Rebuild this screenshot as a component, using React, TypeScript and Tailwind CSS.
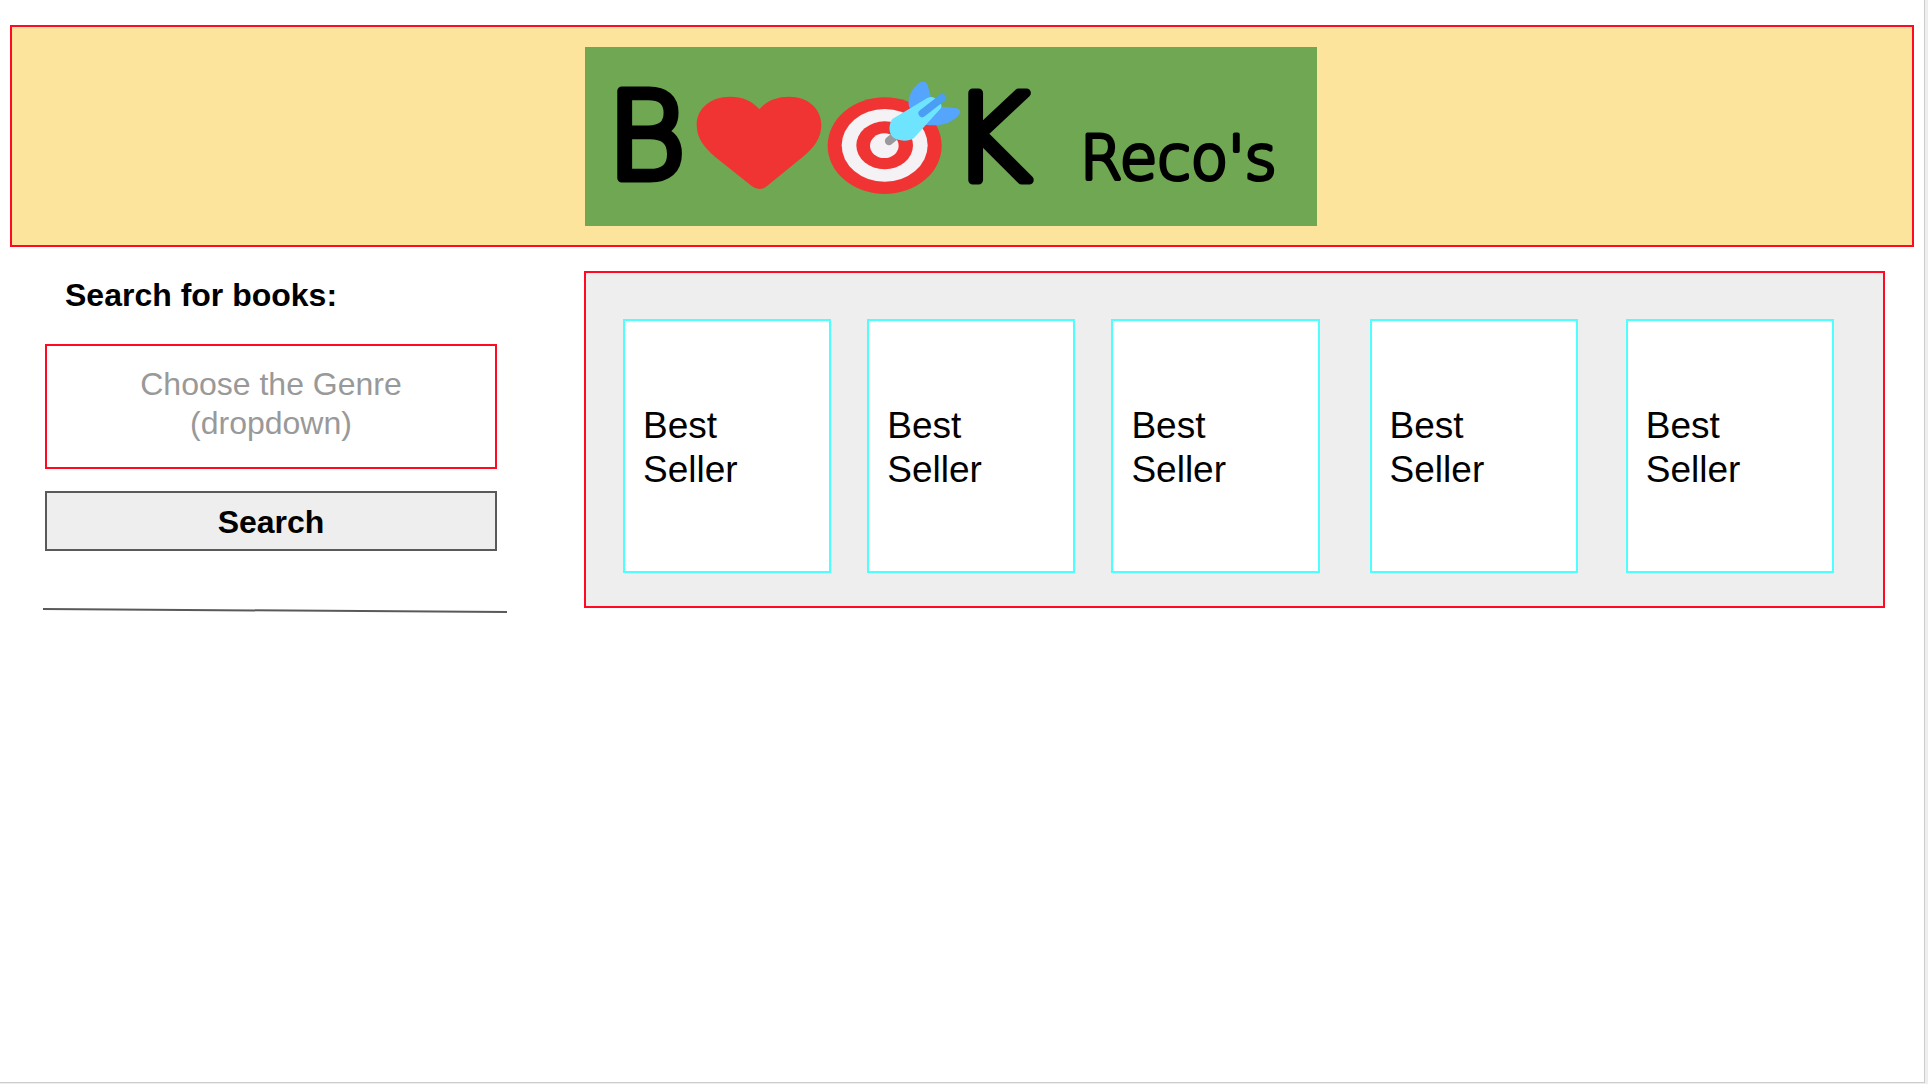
import { useState } from "react";

const genres = ["Fiction", "Mystery", "Romance", "Science Fiction", "Biography"];

const bestSellers = [
  { id: 1, gap: "" },
  { id: 2, gap: "ml-9" },
  { id: 3, gap: "ml-9" },
  { id: 4, gap: "ml-[50px]" },
  { id: 5, gap: "ml-12" },
];

function Logo() {
  return (
    <svg
      viewBox="0 0 732 179"
      role="img"
      aria-label="Book Reco's"
      className="block w-[732px] max-w-full bg-[#6fa753]"
    >
      <g
        fontFamily='"DejaVu Sans", sans-serif'
        fontWeight={200}
        fill="#000"
        stroke="#000"
        strokeLinejoin="round"
      >
        <text x="22" y="131" fontSize="120" strokeWidth="9">B</text>
        <text x="367" y="133" fontSize="120" strokeWidth="9">K</text>
        <text x="495" y="132" fontSize="61" strokeWidth="4">Reco's</text>
      </g>
      <g transform="scale(0.33333) translate(-15 -21)">
        <path
          fill="#f03434"
          d="M538 208C518 183 487 170 450 170C392 170 350 205 350 255C350 295 375 325 405 350L515 438Q538 456 561 438L669 350C700 325 724 295 724 255C724 205 683 170 628 170C590 170 558 183 538 208Z"
        />
        <ellipse cx="914" cy="317" rx="171" ry="145" fill="#f03434" />
        <ellipse cx="914" cy="316" rx="129" ry="109" fill="#f4f2f4" />
        <ellipse cx="914" cy="316" rx="85" ry="72" fill="#f03434" />
        <ellipse cx="913" cy="317" rx="43" ry="37" fill="#f4f2f4" />
        <path d="M927 303L950 284" stroke="#9a9a9d" strokeWidth="25" strokeLinecap="round" />
        <path
          fill="#56a5fc"
          d="M988 202C979 170 1004 135 1023 126Q1036 121 1043 135L1053 172L1086 200L1130 205Q1147 211 1138 222C1120 246 1087 262 1036 254Z"
        />
        <path
          fill="#6ee4fe"
          d="M937 237L1042 174Q1057 167 1068 177L1083 192Q1087 201 1080 208L1002 294C985 307 950 304 936 289C926 276 926 252 937 237Z"
        />
        <path d="M1027 220L1087 173" stroke="#4a9ff5" strokeWidth="23" strokeLinecap="round" />
      </g>
    </svg>
  );
}

export default function App() {
  const [genre, setGenre] = useState("");

  return (
    <div className="flex min-h-screen bg-[#eeeeee] pr-[3px] pb-px font-['Liberation_Sans',Arial,sans-serif] text-black">
      <div className="flex-1 border-r border-b border-[#cccccc] bg-white pt-[25px] pl-[10px]">
        <header className="mr-[10px] border-2 border-[#ff0a22] bg-[#fce49c] pt-5 pb-[19px] pl-[573px]">
          <Logo />
        </header>

        <div className="mt-6 mr-[39px] flex items-start">
          <form
            className="flex w-[487px] shrink-0 flex-col pl-[35px]"
            onSubmit={(event) => event.preventDefault()}
          >
            <label htmlFor="genre" className="mt-[5px] pl-5 text-[32px] leading-[39px] font-bold">
              Search for books:
            </label>
            <div className="mt-[29px] grid border-2 border-[#ff0a22]">
              <select
                id="genre"
                value={genre}
                onChange={(event) => setGenre(event.target.value)}
                className="col-start-1 row-start-1 w-full cursor-pointer appearance-none text-transparent"
              >
                <option value="" aria-label="Choose the Genre" />
                {genres.map((name) => (
                  <option key={name} value={name} className="text-black">
                    {name}
                  </option>
                ))}
              </select>
              <span className="pointer-events-none col-start-1 row-start-1 px-12 pt-[19px] pb-6 text-center text-[32px] leading-[39px] text-[#999999]">
                {genre || (
                  <>
                    Choose the Genre
                    <br />
                    (dropdown)
                  </>
                )}
              </span>
            </div>
            <button
              type="submit"
              className="mt-[22px] cursor-pointer border-2 border-[#595959] bg-[#eeeeee] pt-[10px] pb-[7px] text-[32px] leading-[39px] font-bold"
            >
              Search
            </button>
            <svg viewBox="0 0 464 6" className="mt-[57px] -mr-[10px] -ml-[2px] block" aria-hidden="true">
              <path d="M0 1L464 4" stroke="#595959" strokeWidth="2" />
            </svg>
          </form>

          <main className="ml-[87px] flex flex-1 border-2 border-[#ff0a22] bg-[#eeeeee] pt-[46px] pr-[49px] pb-[33px] pl-[37px]">
            {bestSellers.map(({ id, gap }) => (
              <article
                key={id}
                className={`${gap} flex h-[254px] flex-1 items-center border-2 border-[#4dffff] bg-white px-[18px] pt-1 text-[37px] leading-[44px]`}
              >
                <h2>
                  Best
                  <br />
                  Seller
                </h2>
              </article>
            ))}
          </main>
        </div>
      </div>
    </div>
  );
}
